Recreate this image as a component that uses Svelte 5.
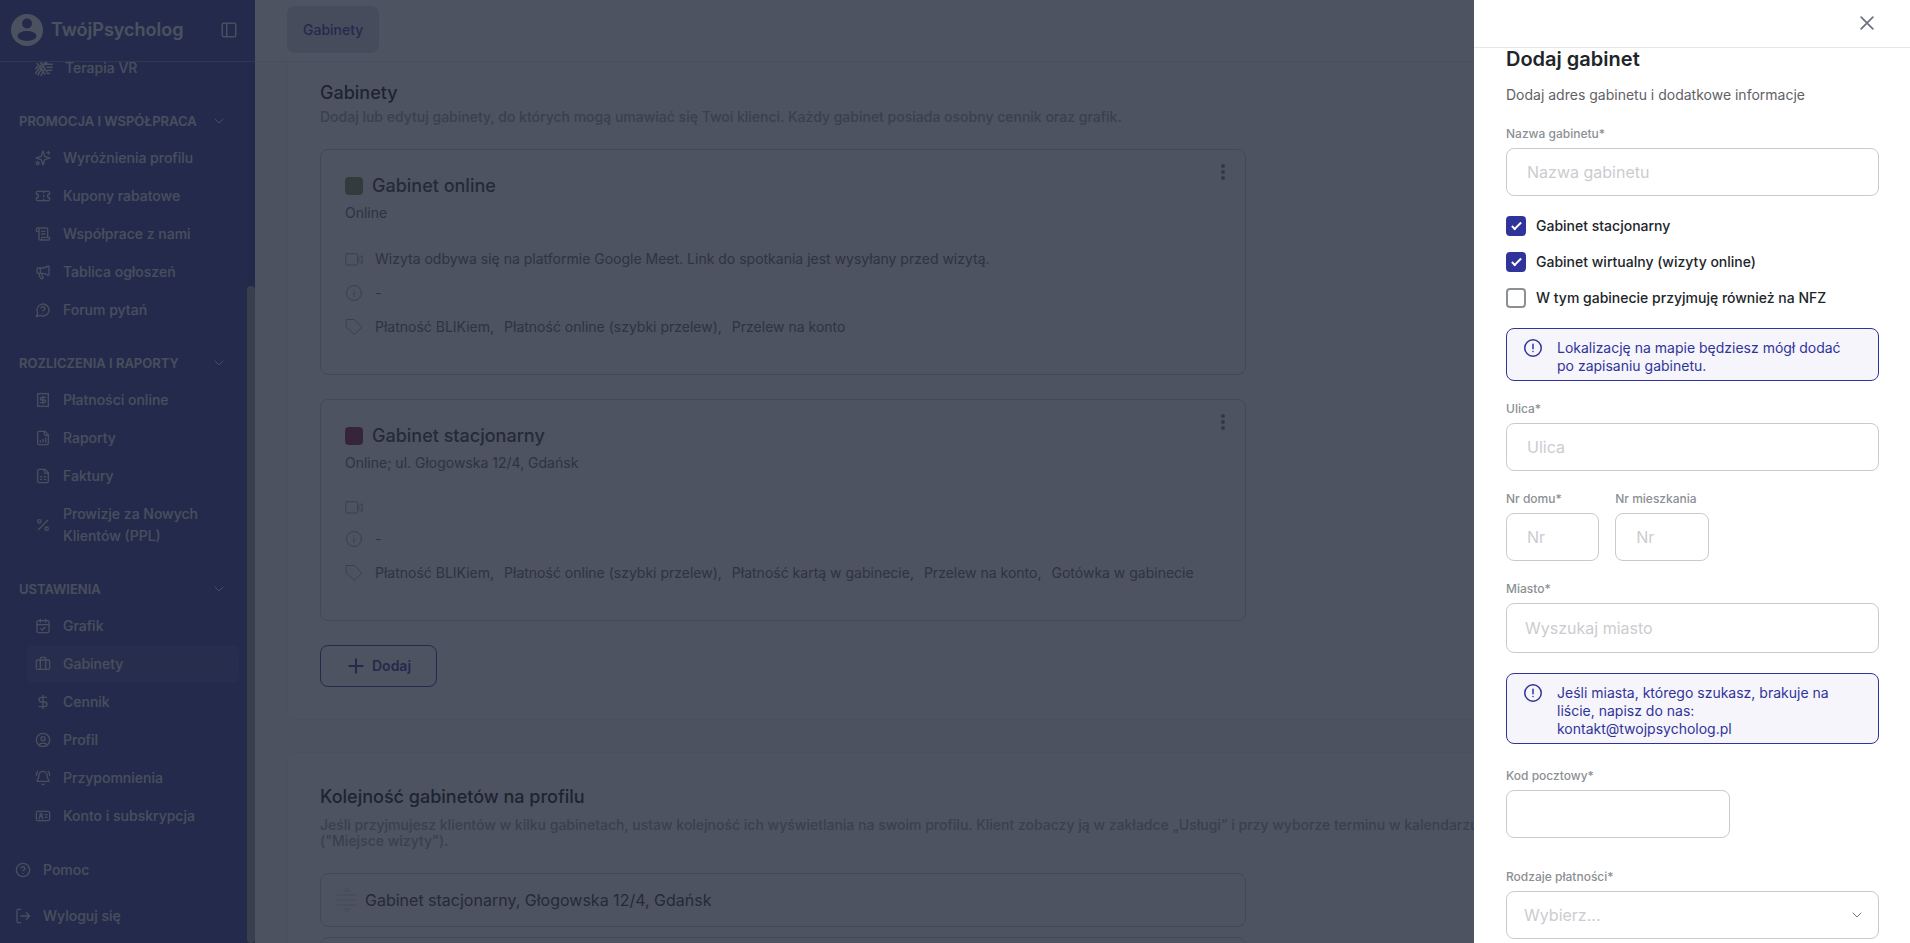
<script>
    const icons = {
        vr: '<path d="M1 13l2-3M1 19l9-13M4 21L14 4M8 22L13 13M7 4l9 13M3 6l10 14M14 8l2-3M15 7h8M16 11h7M17 15h5M16 19h3"/>',
        sparkles: '<path d="M9.9 15.5A2 2 0 0 0 8.5 14.1l-6.1-1.6a.5.5 0 0 1 0-1L8.5 9.9A2 2 0 0 0 9.9 8.5l1.6-6.1a.5.5 0 0 1 1 0l1.6 6.1a2 2 0 0 0 1.4 1.4l6.1 1.6a.5.5 0 0 1 0 1l-6.1 1.6a2 2 0 0 0-1.4 1.4l-1.6 6.1a.5.5 0 0 1-1 0z"/><path d="M20 2v4M22 4h-4"/><circle cx="4" cy="20" r="2"/>',
        ticket: '<path d="M2 9a3 3 0 0 1 0 6v2a2 2 0 0 0 2 2h16a2 2 0 0 0 2-2v-2a3 3 0 0 1 0-6V7a2 2 0 0 0-2-2H4a2 2 0 0 0-2 2ZM13 5v2M13 17v2M13 11v2"/>',
        scroll: '<path d="M15 12h-5M15 8h-5M19 17V5a2 2 0 0 0-2-2H4M8 21h12a2 2 0 0 0 2-2v-1a1 1 0 0 0-1-1H11a1 1 0 0 0-1 1v1a2 2 0 1 1-4 0V5a2 2 0 1 0-4 0v2a1 1 0 0 0 1 1h3"/>',
        megaphone: '<path d="M11 6a13 13 0 0 0 8.4-2.8A1 1 0 0 1 21 4v12a1 1 0 0 1-1.6.8A13 13 0 0 0 11 14H5a2 2 0 0 1-2-2V8a2 2 0 0 1 2-2zM6 14a12 12 0 0 0 2.4 7.2 2 2 0 0 0 3.2-2.4A8 8 0 0 1 10 14M8 6v8"/>',
        forum: '<path d="M7.9 20A9 9 0 1 0 4 16.1L2 22ZM9.1 9a3 3 0 0 1 5.8 1c0 2-3 3-3 3M12 17h.01"/>',
        receipt: '<path d="M4 2v20l2-1 2 1 2-1 2 1 2-1 2 1 2-1 2 1V2l-2 1-2-1-2 1-2-1-2 1-2-1-2 1ZM16 8h-6a2 2 0 1 0 0 4h4a2 2 0 1 1 0 4H8M12 17.5v-11"/>',
        chart: '<path d="M15 2H6a2 2 0 0 0-2 2v16a2 2 0 0 0 2 2h12a2 2 0 0 0 2-2V7ZM14 2v4a2 2 0 0 0 2 2h4M8 18v-2M12 18v-4M16 18v-6"/>',
        invoice: '<path d="M15 2H6a2 2 0 0 0-2 2v16a2 2 0 0 0 2 2h12a2 2 0 0 0 2-2V7ZM14 2v4a2 2 0 0 0 2 2h4M8 13h2M14 13h2M8 17h2M14 17h2"/>',
        percent: '<path d="M19 5L5 19"/><circle cx="6.5" cy="6.5" r="2.5"/><circle cx="17.5" cy="17.5" r="2.5"/>',
        calendar: '<path d="M8 2v4M16 2v4M3 10h18M9 16l2 2 4-4"/><rect x="3" y="4" width="18" height="18" rx="2"/>',
        briefcase: '<path d="M16 20V4a2 2 0 0 0-2-2h-4a2 2 0 0 0-2 2v16"/><rect x="2" y="6" width="20" height="14" rx="2"/>',
        dollar: '<path d="M12 2v20M17 5H9.5a3.5 3.5 0 0 0 0 7h5a3.5 3.5 0 0 1 0 7H6"/>',
        user: '<circle cx="12" cy="12" r="10"/><circle cx="12" cy="10" r="3"/><path d="M7 20.7V19a2 2 0 0 1 2-2h6a2 2 0 0 1 2 2v1.7"/>',
        bell: '<path d="M10.3 21a2 2 0 0 0 3.4 0M22 8c0-2.3-.8-4.3-2-6M4 2C2.8 3.7 2 5.7 2 8M3.3 15.3A1 1 0 0 0 4 17h16a1 1 0 0 0 .7-1.7C19.4 14 18 12.5 18 8A6 6 0 0 0 6 8c0 4.5-1.4 6-2.7 7.3"/>',
        card: '<rect x="2" y="5" width="20" height="14" rx="2"/><circle cx="9" cy="10" r="1.7"/><path d="M6.5 16v-1a2.5 2.5 0 0 1 5 0v1M15.5 10H18M15.5 14H18"/>',
        help: '<circle cx="12" cy="12" r="10"/><path d="M9.1 9a3 3 0 0 1 5.8 1c0 2-3 3-3 3M12 17h.01"/>',
        logout: '<path d="M17 17l5-5-5-5M22 12H9M9 22H5a2 2 0 0 1-2-2V4a2 2 0 0 1 2-2h4"/>',
        panel: '<rect x="3" y="3" width="18" height="18" rx="2"/><path d="M9 3v18"/>',
        chevron: '<path d="M4 8l8 8 8-8"/>',
        video: '<rect x="1" y="5" width="16" height="15" rx="2"/><path d="M17 12.5l6-5v10z"/>',
        info: '<circle cx="12" cy="12" r="10"/><path d="M12 11v6M12 7.5v.5"/>',
        tag: '<path d="M2 2h10.5l9 9a1.5 1.5 0 0 1 0 2l-8 8a1.5 1.5 0 0 1-2 0L2 12.5zM7 7h.01"/>',
        alert: '<circle cx="12" cy="12" r="11"/><path d="M12 7v6M12 16.5v.2"/>',
        plus: '<path d="M12 2v20M2 12h20"/>',
        close: '<path d="M2 2l20 20M22 2L2 22"/>'
    };

    const menu = [
        { title: null, items: [{ icon: 'vr', label: 'Terapia VR', wide: true }] },
        {
            title: 'PROMOCJA I WSPÓŁPRACA',
            items: [
                { icon: 'sparkles', label: 'Wyróżnienia profilu' },
                { icon: 'ticket', label: 'Kupony rabatowe' },
                { icon: 'scroll', label: 'Współprace z nami' },
                { icon: 'megaphone', label: 'Tablica ogłoszeń' },
                { icon: 'forum', label: 'Forum pytań' }
            ]
        },
        {
            title: 'ROZLICZENIA I RAPORTY',
            items: [
                { icon: 'receipt', label: 'Płatności online' },
                { icon: 'chart', label: 'Raporty' },
                { icon: 'invoice', label: 'Faktury' },
                { icon: 'percent', label: 'Prowizje za Nowych Klientów (PPL)' }
            ]
        },
        {
            title: 'USTAWIENIA',
            items: [
                { icon: 'calendar', label: 'Grafik' },
                { icon: 'briefcase', label: 'Gabinety', active: true },
                { icon: 'dollar', label: 'Cennik' },
                { icon: 'user', label: 'Profil' },
                { icon: 'bell', label: 'Przypomnienia' },
                { icon: 'card', label: 'Konto i subskrypcja' }
            ]
        }
    ];

    const offices = [
        {
            name: 'Gabinet online',
            color: 'green',
            address: 'Online',
            video: 'Wizyta odbywa się na platformie Google Meet. Link do spotkania jest wysyłany przed wizytą.',
            payments: ['Płatność BLIKiem', 'Płatność online (szybki przelew)', 'Przelew na konto']
        },
        {
            name: 'Gabinet stacjonarny',
            color: 'red',
            address: 'Online; ul. Głogowska 12/4, Gdańsk',
            video: '',
            payments: ['Płatność BLIKiem', 'Płatność online (szybki przelew)', 'Płatność kartą w gabinecie', 'Przelew na konto', 'Gotówka w gabinecie']
        }
    ];

    let stationary = $state(true);
    let virtual = $state(true);
    let nfz = $state(false);
    let drawerOpen = $state(true);
</script>

{#snippet icon(name, size = 16, stroke = 2)}
    <svg width={size} height={size} viewBox="0 0 24 24" fill="none" stroke="currentColor" stroke-width={stroke} stroke-linecap="round" stroke-linejoin="round" aria-hidden="true">
        {@html icons[name]}
    </svg>
{/snippet}

{#snippet handle()}
    <svg width="20" height="26" viewBox="0 0 20 26" fill="currentColor" aria-hidden="true">
        <path d="M10 0l4 5H6zM10 26l4-5H6zM0 7h20v2H0zM0 12h20v2H0zM0 17h20v2H0z" />
    </svg>
{/snippet}

<div class="app">
    <aside class="sidebar">
        <div class="brand">
            <svg class="logo" width="32" height="32" viewBox="0 0 32 32" aria-hidden="true">
                <circle cx="16" cy="16" r="16" fill="#f3f4f6" />
                <circle cx="16" cy="9.5" r="5" fill="#30349a" />
                <ellipse cx="16" cy="22" rx="9.5" ry="5" fill="#30349a" />
            </svg>
            <span class="brand-name">TwójPsycholog</span>
            <button class="toggle" type="button" aria-label="Zwiń menu">{@render icon('panel', 18, 2)}</button>
        </div>
        <div class="sidebar-body">
            <nav class="menu">
                {#each menu as group}
                    {#if group.title}
                        <button class="group-title" type="button">
                            {group.title}
                            {@render icon('chevron', 12, 2)}
                        </button>
                    {/if}
                    {#each group.items as item}
                        <a class="menu-item" class:active={item.active} href="#menu">
                            {@render icon(item.icon, item.wide ? 18 : 16)}
                            <span>{item.label}</span>
                        </a>
                    {/each}
                {/each}
                <div class="menu-bottom">
                    <a class="bottom-item" href="#help">{@render icon('help')}Pomoc</a>
                    <a class="bottom-item" href="#logout">{@render icon('logout')}Wyloguj się</a>
                </div>
            </nav>
            <div class="scrollbar"><div class="thumb"></div></div>
        </div>
    </aside>

    <main class="main">
        <header class="topbar">
            <a class="tab" href="#offices">Gabinety</a>
        </header>
        <div class="content">
            <section class="panel panel-first">
                <h2>Gabinety</h2>
                <p class="lead">Dodaj lub edytuj gabinety, do których mogą umawiać się Twoi klienci. Każdy gabinet posiada osobny cennik oraz grafik.</p>
                <div class="offices">
                    {#each offices as office}
                        <article class="office">
                            <button class="more" type="button" aria-label="Więcej opcji">
                                <svg width="4" height="16" viewBox="0 0 4 16" fill="currentColor" aria-hidden="true">
                                    <circle cx="2" cy="2" r="2" /><circle cx="2" cy="8" r="2" /><circle cx="2" cy="14" r="2" />
                                </svg>
                            </button>
                            <h3><span class="swatch {office.color}"></span>{office.name}</h3>
                            <p class="address">{office.address}</p>
                            <ul class="details">
                                <li>{@render icon('video', 18, 1)}{#if office.video}<span>{office.video}</span>{/if}</li>
                                <li>{@render icon('info', 18, 1)}<span>-</span></li>
                                <li>
                                    {@render icon('tag', 18, 1)}
                                    <span class="payments">
                                        {#each office.payments as payment, i}
                                            <span>{payment}{i < office.payments.length - 1 ? ',' : ''}</span>
                                        {/each}
                                    </span>
                                </li>
                            </ul>
                        </article>
                    {/each}
                </div>
                <button class="add" type="button">{@render icon('plus', 16, 3)}Dodaj</button>
            </section>

            <section class="panel">
                <h2>Kolejność gabinetów na profilu</h2>
                <p class="order-lead">
                    Jeśli przyjmujesz klientów w kilku gabinetach, ustaw kolejność ich wyświetlania na swoim profilu. Klient zobaczy ją w zakładce „Usługi” i przy wyborze terminu w kalendarzu<br />("Miejsce wizyty").
                </p>
                <ul class="order">
                    <li>{@render handle()}Gabinet stacjonarny, Głogowska 12/4, Gdańsk</li>
                    <li>{@render handle()}Gabinet online</li>
                </ul>
            </section>
        </div>
    </main>

    {#if drawerOpen}
        <div class="backdrop"></div>
        <div class="drawer" role="dialog" aria-labelledby="drawer-title">
            <div class="drawer-head">
                <button class="close" type="button" aria-label="Zamknij" onclick={() => (drawerOpen = false)}>{@render icon('close', 14, 3)}</button>
            </div>
            <form class="form">
                <h1 id="drawer-title">Dodaj gabinet</h1>
                <p class="intro">Dodaj adres gabinetu i dodatkowe informacje</p>

                <div class="field">
                    <label for="name">Nazwa gabinetu*</label>
                    <input id="name" type="text" placeholder="Nazwa gabinetu" />
                </div>

                <div class="checks">
                    <label class="check"><input type="checkbox" bind:checked={stationary} />Gabinet stacjonarny</label>
                    <label class="check"><input type="checkbox" bind:checked={virtual} />Gabinet wirtualny (wizyty online)</label>
                    <label class="check"><input type="checkbox" bind:checked={nfz} />W tym gabinecie przyjmuję również na NFZ</label>
                </div>

                <div class="notice">
                    {@render icon('alert', 18, 2)}
                    <span>Lokalizację na mapie będziesz mógł dodać po zapisaniu gabinetu.</span>
                </div>

                <div class="field">
                    <label for="street">Ulica*</label>
                    <input id="street" type="text" placeholder="Ulica" />
                </div>

                <div class="numbers">
                    <div class="field">
                        <label for="house">Nr domu*</label>
                        <input id="house" type="text" placeholder="Nr" />
                    </div>
                    <div class="field">
                        <label for="flat">Nr mieszkania</label>
                        <input id="flat" type="text" placeholder="Nr" />
                    </div>
                </div>

                <div class="field">
                    <label for="city">Miasto*</label>
                    <input id="city" class="search" type="text" placeholder="Wyszukaj miasto" />
                </div>

                <div class="notice">
                    {@render icon('alert', 18, 2)}
                    <span>Jeśli miasta, którego szukasz, brakuje na liście, napisz do nas: kontakt@twojpsycholog.pl</span>
                </div>

                <div class="field postcode">
                    <label for="postcode">Kod pocztowy*</label>
                    <input id="postcode" type="text" />
                </div>

                <div class="field payment">
                    <label for="payment">Rodzaje płatności*</label>
                    <div class="select">
                        <select id="payment">
                            <option value="">Wybierz...</option>
                            <option>Płatność BLIKiem</option>
                            <option>Płatność online (szybki przelew)</option>
                            <option>Przelew na konto</option>
                        </select>
                        {@render icon('chevron', 12, 2)}
                    </div>
                </div>
            </form>
        </div>
    {/if}
</div>

<style>
    :global(body) {
        margin: 0;
        overflow: hidden;
    }

    .app {
        --primary: #30349a;
        display: flex;
        height: 100vh;
        overflow: hidden;
        background: #f8f9fb;
        color: #111;
        font-family: Inter, "Noto Sans", sans-serif;
        font-size: 14px;
        line-height: 20px;
    }

    .app *, .app *::after {
        box-sizing: border-box;
    }

    button, input, select {
        font: inherit;
        color: inherit;
    }

    button {
        display: flex;
        align-items: center;
        padding: 0;
        border: none;
        background: none;
        cursor: pointer;
    }

    a {
        color: inherit;
        text-decoration: none;
    }

    h1, h2, h3, p, ul {
        margin: 0;
        padding: 0;
    }

    svg {
        flex: none;
    }

    /* sidebar */
    .sidebar {
        display: flex;
        flex-direction: column;
        flex: none;
        width: 255px;
        background: var(--primary);
        color: #e5e7eb;
    }

    .brand {
        display: flex;
        align-items: center;
        flex: none;
        height: 62px;
        padding: 0 17px 2px 11px;
        border-bottom: 1px solid #6f72bb;
    }

    .brand-name {
        margin-left: 8px;
        font-size: 18px;
        font-weight: 600;
        color: #f3f4f6;
    }

    .toggle {
        margin-left: auto;
    }

    .sidebar-body {
        display: flex;
        flex: 1;
        min-height: 0;
    }

    .menu {
        display: flex;
        flex-direction: column;
        justify-content: flex-end;
        flex: 1;
        padding: 0 8px 4px 0;
        overflow: hidden;
    }

    .group-title {
        justify-content: space-between;
        flex: none;
        height: 36px;
        margin-top: 16px;
        padding: 0 14px 0 19px;
        font-size: 13px;
        font-weight: 600;
    }

    .menu-item {
        display: flex;
        align-items: center;
        flex: none;
        gap: 12px;
        margin-left: 27px;
        padding: 8px;
        border-radius: 6px;
        font-weight: 500;
        line-height: 22px;
    }

    .menu-item.active {
        background: rgba(255, 255, 255, 0.08);
    }

    .menu-bottom {
        flex: none;
        margin-top: 12px;
    }

    .bottom-item {
        display: flex;
        align-items: center;
        gap: 12px;
        height: 46px;
        padding-left: 15px;
        font-weight: 500;
    }

    .scrollbar {
        display: flex;
        flex-direction: column;
        justify-content: flex-end;
        width: 8px;
        border-radius: 4px;
        background: #2c3090;
    }

    .thumb {
        height: calc(75% - 4px);
        border-radius: 4px;
        background: #999;
    }

    /* page */
    .main {
        display: flex;
        flex-direction: column;
        flex: 1;
        min-width: 0;
    }

    .topbar {
        display: flex;
        align-items: flex-start;
        flex: none;
        height: 62px;
        padding: 6px 32px;
        border-bottom: 1px solid #e5e7eb;
        background: #fff;
    }

    .tab {
        padding: 14px 16px 13px;
        border-radius: 8px;
        background: #dedbee;
        color: var(--primary);
        font-weight: 500;
    }

    .content {
        flex: 1;
        min-height: 0;
        padding: 0 32px;
        overflow: hidden;
    }

    .panel {
        margin-bottom: 32px;
        padding: 32px;
        border: 1px solid #f0f1f3;
        border-radius: 8px;
        background: #fff;
    }

    .panel-first {
        padding-top: 19px;
        border-top: none;
        border-radius: 0 0 8px 8px;
    }

    h2 {
        font-size: 18px;
        font-weight: 500;
        line-height: 24px;
    }

    .lead {
        margin-top: 2px;
        color: #9a9ea8;
        font-weight: 500;
    }

    .offices {
        display: flex;
        flex-direction: column;
        gap: 24px;
        max-width: 926px;
        margin: 22px 0 24px;
    }

    .office {
        position: relative;
        padding: 24px 24px 36px;
        border: 1px solid #c8c9cf;
        border-radius: 8px;
        color: #5f6368;
    }

    .more {
        position: absolute;
        top: 6px;
        right: 6px;
        justify-content: center;
        width: 32px;
        height: 32px;
        color: #777;
    }

    h3 {
        display: flex;
        align-items: center;
        gap: 9px;
        color: #333;
        font-size: 18px;
        font-weight: 500;
        line-height: 24px;
    }

    .swatch {
        width: 18px;
        height: 18px;
        border-radius: 4px;
    }

    .swatch.green {
        background: #7a8c4e;
    }

    .swatch.red {
        background: #8c1a42;
    }

    .address {
        margin-top: 4px;
        line-height: 22px;
    }

    .details {
        display: flex;
        flex-direction: column;
        gap: 12px;
        margin-top: 24px;
        list-style: none;
    }

    .details li {
        display: flex;
        align-items: center;
        gap: 12px;
        line-height: 22px;
    }

    .details svg {
        color: #7c7f86;
    }

    .payments {
        display: flex;
        flex-wrap: wrap;
        gap: 0 10px;
    }

    .add {
        gap: 8px;
        height: 42px;
        padding: 0 25px 0 27px;
        border: 1px solid var(--primary);
        border-radius: 8px;
        color: var(--primary);
        font-weight: 600;
    }

    .order-lead {
        margin-top: 8px;
        color: #9a9ea8;
        font-weight: 500;
        line-height: 16px;
        white-space: nowrap;
    }

    .order {
        display: flex;
        flex-direction: column;
        gap: 10px;
        max-width: 926px;
        margin-top: 24px;
        list-style: none;
    }

    .order li {
        display: flex;
        align-items: center;
        gap: 8px;
        height: 54px;
        padding: 0 16px;
        border: 1px solid #c8c9cf;
        border-radius: 8px;
        color: #333;
        font-size: 16px;
    }

    .order svg {
        color: #e3e4e6;
    }

    /* drawer */
    .backdrop {
        position: fixed;
        inset: 0;
        background: rgba(32, 40, 56, 0.8);
    }

    .drawer {
        position: fixed;
        top: 0;
        right: 0;
        bottom: 0;
        display: flex;
        flex-direction: column;
        width: 436px;
        max-width: 100%;
        background: #fff;
    }

    .drawer-head {
        display: flex;
        align-items: center;
        justify-content: flex-end;
        flex: none;
        height: 48px;
        padding: 0 36px 2px;
        border-bottom: 1px solid #e5e7eb;
    }

    .close {
        color: #6b7280;
    }

    .form {
        flex: 1;
        min-height: 0;
        padding: 0 31px 0 32px;
        overflow: hidden;
    }

    h1 {
        font-size: 20px;
        font-weight: 600;
        line-height: 22px;
        color: #212529;
    }

    .intro {
        margin-top: 14px;
        color: #5f6166;
        line-height: 22px;
    }

    .field {
        display: flex;
        flex-direction: column;
        gap: 6px;
        margin-top: 20px;
    }

    .field label {
        color: #8c8f94;
        font-size: 12px;
        font-weight: 500;
        line-height: 16px;
    }

    .field input, .field select {
        width: 100%;
        height: 48px;
        padding: 0 20px;
        border: 1px solid #c9cacd;
        border-radius: 8px;
        background: #fff;
        font-size: 16px;
    }

    .field input::placeholder {
        color: #cbccd0;
        opacity: 1;
    }

    .field .search {
        height: 50px;
        padding: 0 18px;
    }

    .checks {
        display: flex;
        flex-direction: column;
        gap: 16px;
        margin-top: 20px;
    }

    .check {
        display: flex;
        align-items: center;
        gap: 10px;
        color: #212529;
        font-weight: 500;
    }

    .check input {
        appearance: none;
        position: relative;
        flex: none;
        width: 20px;
        height: 20px;
        margin: 0;
        border: 2px solid #8c8f94;
        border-radius: 4px;
        background: #fff;
    }

    .check input:checked {
        border-color: var(--primary);
        background: var(--primary);
    }

    .check input:checked::after {
        content: "";
        position: absolute;
        top: 2px;
        left: 6px;
        width: 5px;
        height: 10px;
        border: solid #fff;
        border-width: 0 2px 2px 0;
        transform: rotate(45deg);
    }

    .notice {
        display: flex;
        align-items: flex-start;
        gap: 15px;
        margin-top: 20px;
        padding: 10px 24px 5px 17px;
        border: 1px solid var(--primary);
        border-radius: 8px;
        background: #f6f5fb;
        color: var(--primary);
        line-height: 18px;
    }

    .numbers {
        display: flex;
        gap: 16px;
    }

    .numbers .field {
        width: 25%;
    }

    .numbers label {
        white-space: nowrap;
    }

    .postcode {
        width: 60%;
        margin-top: 24px;
    }

    .payment {
        margin-top: 31px;
    }

    .select {
        position: relative;
    }

    .field select {
        appearance: none;
        padding: 0 17px;
        color: #cbccd0;
    }

    .select svg {
        position: absolute;
        top: 18px;
        right: 16px;
        color: #777;
        pointer-events: none;
    }
</style>
